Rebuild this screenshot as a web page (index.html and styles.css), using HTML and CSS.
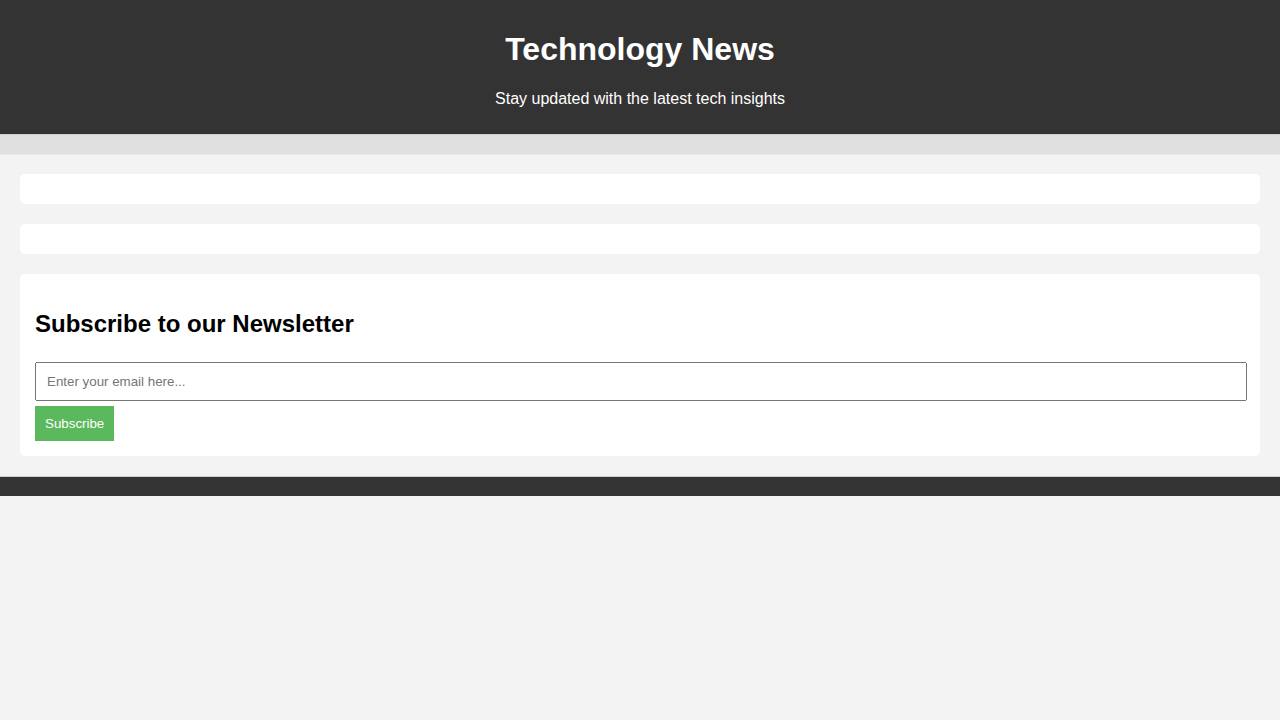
FILE: index.html
```html
<!DOCTYPE html>
<html lang="en">
<head>
<meta charset="utf-8">
<title>Technology News</title>
<link rel="stylesheet" href="styles.css">
</head>
<body>
<header class="site-header">
  <h1 class="site-title">Technology News</h1>
  <p class="site-tagline">Stay updated with the latest tech insights</p>
</header>
<nav class="site-nav"></nav>
<main class="site-main">
  <section class="card"></section>
  <section class="card"></section>
  <section class="card newsletter">
    <h2 class="newsletter-title">Subscribe to our Newsletter</h2>
    <form class="newsletter-form">
      <input class="email-input" type="email" placeholder="Enter your email here...">
      <button class="subscribe-btn" type="button">Subscribe</button>
    </form>
  </section>
</main>
<footer class="site-footer"></footer>
</body>
</html>
```
FILE: styles.css
```css
body {
  margin: 0;
  font-family: "Liberation Sans", Arial, sans-serif;
  background: #f3f3f3;
  color: #000;
}

.site-header {
  background: #333;
  color: #fff;
  text-align: center;
  padding: 10px 0;
  border-bottom: 1px solid #cfcfcf;
}

.site-title {
  font-size: 32px;
  margin: 0.67em 0;
}

.site-tagline {
  font-size: 16px;
  margin: 16px 0;
}

.site-nav {
  background: #e0e0e0;
  height: 19px;
  border-bottom: 1px solid #e6e6e6;
}

.site-main {
  display: flex;
  flex-direction: column;
  gap: 20px;
  padding: 19px 20px 20px;
}

.card {
  background: #fff;
  border-radius: 5px;
  padding: 15px;
}

.newsletter-title {
  font-size: 24px;
  margin: 21px 0 24px;
}

.newsletter-form {
  display: flex;
  flex-direction: column;
  align-items: flex-start;
  gap: 5px;
  margin: 0;
}

.email-input {
  width: calc(100% - 22px);
  padding: 10px;
  font-family: "Liberation Sans", Arial, sans-serif;
  font-size: 13.33px;
  margin: 0;
}

.subscribe-btn {
  background: #5cb85c;
  color: #fff;
  border: none;
  padding: 10px;
  font-family: "Liberation Sans", Arial, sans-serif;
  font-size: 13.33px;
  margin: 0;
}

.site-footer {
  background: #333;
  height: 19px;
  border-top: 1px solid #cfcfcf;
}
```
